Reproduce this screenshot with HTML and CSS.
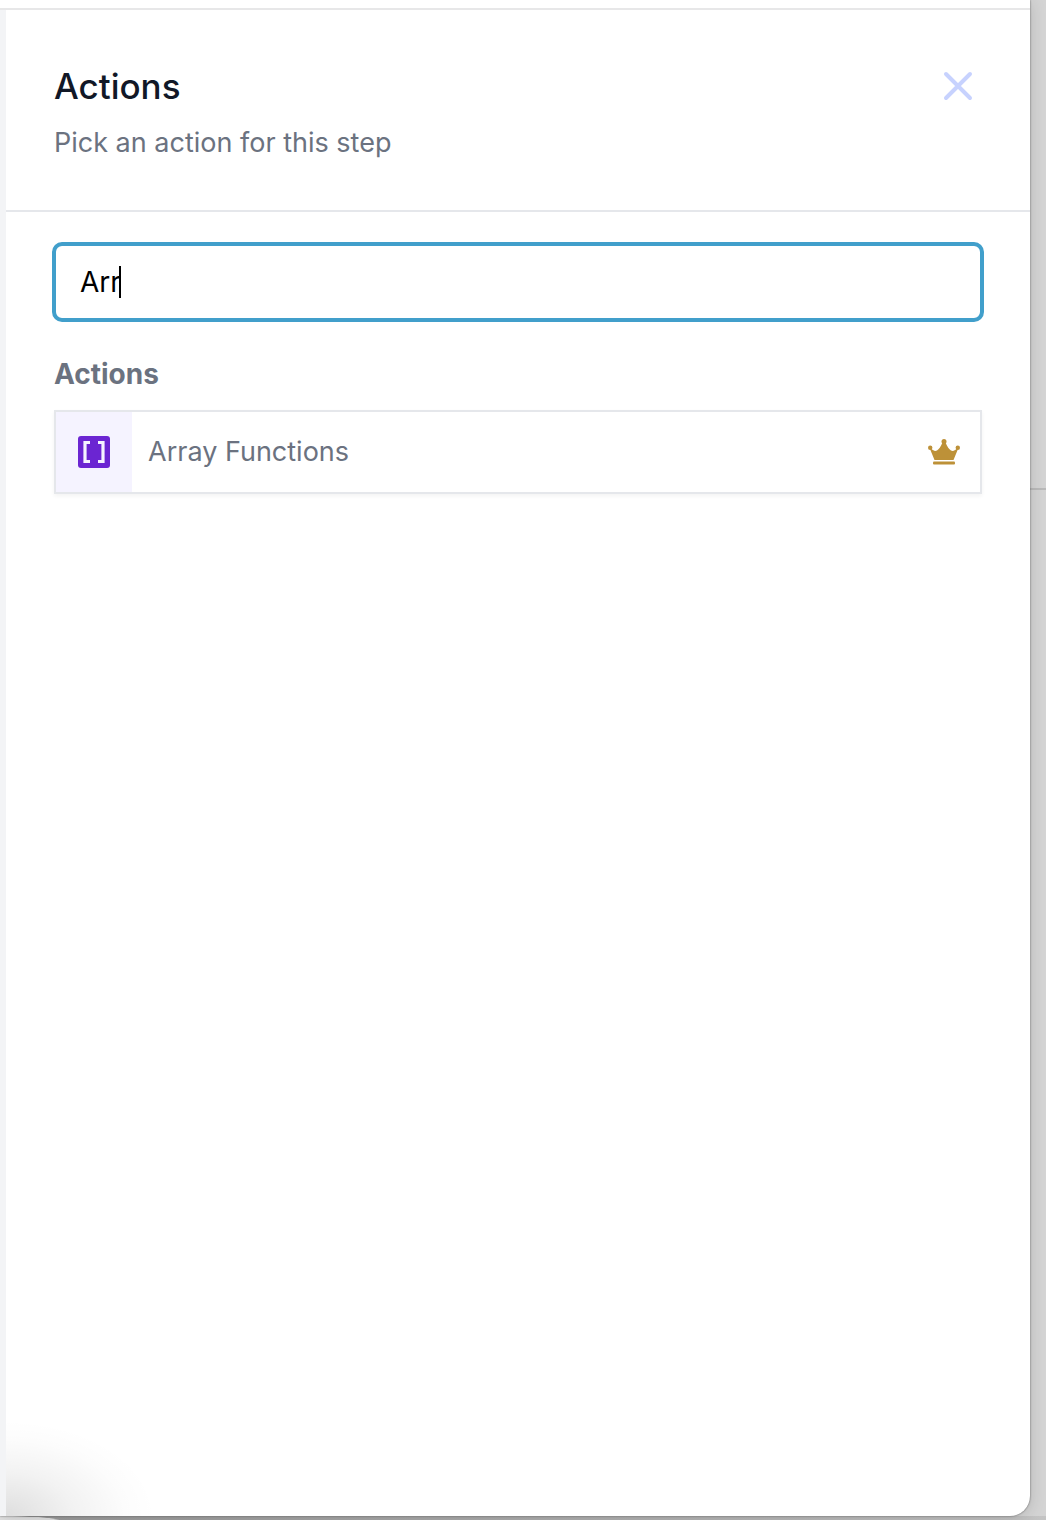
FILE: index.html
```html
<!DOCTYPE html>
<html lang="en">

<head>
    <meta charset="UTF-8">
    <meta name="viewport" content="width=device-width, initial-scale=1.0">
    <title>Actions</title>
    <link rel="stylesheet" href="styles.css">
</head>

<body>

    <div class="window">
        <div class="topbar"></div>

        <!-- Step panel -->
        <main class="panel">
            <header class="panel-header">
                <div>
                    <h1>Actions</h1>
                    <p>Pick an action for this step</p>
                </div>
                <button type="button" class="close" aria-label="Close">
                    <svg viewBox="0 0 32 32" fill="none" stroke="currentColor" stroke-width="4" stroke-linecap="round">
                        <path d="M4 4l24 24M28 4L4 28" />
                    </svg>
                </button>
            </header>

            <div class="panel-body">
                <div class="search">
                    <input type="text" id="search" value="Arr" aria-label="Search actions" autocomplete="off" spellcheck="false">
                    <span class="caret"></span>
                </div>

                <h2>Actions</h2>
                <button type="button" class="action">
                    <span class="action-icon">
                        <svg viewBox="0 0 32 32">
                            <rect width="32" height="32" rx="3" fill="#6b25d2" />
                            <path d="M12 6.5H7v19h5M20 6.5h5v19h-5" fill="none" stroke="#f5f3ff" stroke-width="3.2" />
                        </svg>
                    </span>
                    <span class="action-name">Array Functions</span>
                    <svg class="crown" viewBox="0 0 32 26" fill="currentColor">
                        <circle cx="16" cy="2.6" r="2.5" />
                        <circle cx="2.2" cy="8.8" r="2.2" />
                        <circle cx="29.8" cy="8.8" r="2.2" />
                        <path d="M1.8 9.5L6.5 21h19l4.7-11.5-1.8.6c-1.6 1.7-3.6 2.4-5.4 1.4-2-1.1-3.6-3.6-5.4-7.7h-3.2c-1.8 4.1-3.4 6.6-5.4 7.7-1.8 1-3.8.3-5.4-1.4z" />
                        <rect x="5" y="22.6" width="22" height="3" rx="1" />
                    </svg>
                </button>
            </div>
        </main>
    </div>

</body>

</html>
```
FILE: styles.css
```css
* {
    box-sizing: border-box;
}

body {
    margin: 0;
    min-height: 100vh;
    display: flex;
    padding: 0 16px 4px 0;
    background:
        linear-gradient(#bababa, #bababa) 0 488px / 100% 2px no-repeat,
        radial-gradient(ellipse 60px 4px at 0 100%, #e2e2e2 90%, transparent) 0 100% / 60px 4px no-repeat,
        linear-gradient(90deg, #999, #c4c4c4) 0 100% / 100% 4px no-repeat,
        #d4d4d4;
    font-family: Inter, "Liberation Sans", sans-serif;
    font-size: 27px;
    line-height: 42px;
    color: #6b7280;
}

/* Browser window */
.window {
    flex: 1;
    display: flex;
    flex-direction: column;
    overflow: hidden;
    border-radius: 0 0 20px 0;
    background: #fff;
    box-shadow: 0 0 2px #555, 0 2px 16px rgba(0, 0, 0, 0.15);
}

.topbar {
    height: 10px;
    border-bottom: 2px solid #e7e7e8;
}

.panel {
    flex: 1;
    border-left: 6px solid #f3f4f6;
    background: radial-gradient(ellipse 150px 96px at 0 100%, rgba(0, 0, 0, 0.13), rgba(0, 0, 0, 0.05) 45%, rgba(0, 0, 0, 0.01) 80%, transparent);
}

.panel-header {
    display: flex;
    justify-content: space-between;
    align-items: flex-start;
    padding: 48px 56px 46px 48px;
    border-bottom: 2px solid #e5e7eb;
}

h1 {
    margin: 0;
    font-size: 35px;
    font-weight: 500;
    line-height: 56px;
    color: #111827;
}

p {
    margin: 8px 0 0;
}

.close {
    display: flex;
    margin: 12px 0 0;
    padding: 0;
    border: none;
    background: none;
    color: #c7d2fe;
    cursor: pointer;
}

.close svg {
    width: 32px;
    height: 32px;
}

.panel-body {
    padding: 30px 46px;
}

.search {
    position: relative;
}

.search input {
    display: block;
    width: 100%;
    height: 80px;
    padding: 0 24px;
    border: 4px solid #419fcb;
    border-radius: 10px;
    outline: none;
    background: #fff;
    font: inherit;
    font-size: 28px;
    color: #000;
}

/* Text cursor after the typed letters */
.caret {
    position: absolute;
    top: 24px;
    left: 67px;
    width: 2px;
    height: 32px;
    background: #000;
}

h2 {
    margin: 32px 2px 16px;
    font-size: 28px;
    font-weight: 700;
    line-height: 40px;
}

.action {
    display: flex;
    align-items: center;
    width: calc(100% - 4px);
    margin: 0 2px;
    padding: 0 20px 0 0;
    border: 2px solid #e5e7eb;
    background: #fff;
    box-shadow: 0 2px 4px rgba(0, 0, 0, 0.05);
    font: inherit;
    color: inherit;
    text-align: left;
    cursor: pointer;
}

.action-icon {
    display: flex;
    padding: 24px 22px;
    background: #f5f3ff;
}

.action-icon svg {
    width: 32px;
    height: 32px;
}

.action-name {
    flex: 1;
    padding-left: 16px;
}

.crown {
    width: 32px;
    height: 26px;
    color: #bd9138;
}
```
